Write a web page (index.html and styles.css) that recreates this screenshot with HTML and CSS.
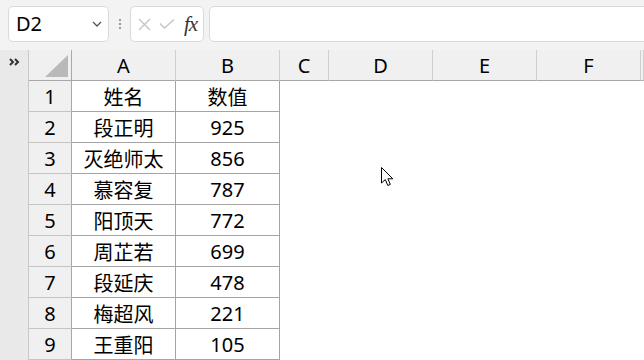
FILE: index.html
```html
<!DOCTYPE html>
<html lang="zh-CN">
<head>
    <meta charset="UTF-8">
    <title>Sheet</title>
    <link rel="stylesheet" href="styles.css">
</head>
<body>
    <div class="app">
        <div class="toolbar">
            <div class="namebox">
                <span class="ref">D2</span>
                <svg class="chev" width="10" height="6" viewBox="0 0 10 6"><path d="M1 1 L5 5 L9 1" fill="none" stroke="#555" stroke-width="1.3"/></svg>
            </div>
            <div class="grip"><i></i><i></i><i></i></div>
            <div class="fxbox">
                <svg width="13" height="13" viewBox="0 0 13 13"><path d="M1 1 L12 12 M12 1 L1 12" stroke="#c4c4c4" stroke-width="1.4"/></svg>
                <svg width="16" height="10" viewBox="0 0 16 10"><path d="M1 4.5 L5.5 9 L15 0.5" fill="none" stroke="#c4c4c4" stroke-width="1.4"/></svg>
                <span class="fx">fx</span>
            </div>
            <div class="formula"></div>
        </div>
        <div class="sheet">
            <div class="strip">
                <svg class="more" width="11" height="8" viewBox="0 0 11 8"><path d="M1 1 L4 4 L1 7 M6 1 L9 4 L6 7" fill="none" stroke="#333" stroke-width="2"/></svg>
            </div>
            <div class="grid">
                <div class="corner"><span class="tri"></span></div>
                <div class="ch">A</div>
                <div class="ch">B</div>
                <div class="ch">C</div>
                <div class="ch">D</div>
                <div class="ch">E</div>
                <div class="ch">F</div>
                <div class="ch"></div>

                <div class="rh">1</div><div class="td">姓名</div><div class="td">数值</div><div class="e"></div><div class="e"></div><div class="e"></div><div class="e"></div><div class="e"></div>
                <div class="rh">2</div><div class="td">段正明</div><div class="td">925</div><div class="e"></div><div class="e"></div><div class="e"></div><div class="e"></div><div class="e"></div>
                <div class="rh">3</div><div class="td">灭绝师太</div><div class="td">856</div><div class="e"></div><div class="e"></div><div class="e"></div><div class="e"></div><div class="e"></div>
                <div class="rh">4</div><div class="td">慕容复</div><div class="td">787</div><div class="e"></div><div class="e"></div><div class="e"></div><div class="e"></div><div class="e"></div>
                <div class="rh">5</div><div class="td">阳顶天</div><div class="td">772</div><div class="e"></div><div class="e"></div><div class="e"></div><div class="e"></div><div class="e"></div>
                <div class="rh">6</div><div class="td">周芷若</div><div class="td">699</div><div class="e"></div><div class="e"></div><div class="e"></div><div class="e"></div><div class="e"></div>
                <div class="rh">7</div><div class="td">段延庆</div><div class="td">478</div><div class="e"></div><div class="e"></div><div class="e"></div><div class="e"></div><div class="e"></div>
                <div class="rh">8</div><div class="td">梅超风</div><div class="td">221</div><div class="e"></div><div class="e"></div><div class="e"></div><div class="e"></div><div class="e"></div>
                <div class="rh">9</div><div class="td">王重阳</div><div class="td">105</div><div class="e"></div><div class="e"></div><div class="e"></div><div class="e"></div><div class="e"></div>
            </div>
        </div>
        <!-- mouse pointer over D5 -->
        <svg class="cursor" width="13" height="20" viewBox="0 0 13 20"><path d="M0.5 0.5 L0.5 16 L4.3 12.6 L6.8 18.5 L9.3 17.4 L6.9 11.8 L11.8 11.8 Z" fill="#fff" stroke="#000" stroke-width="1"/></svg>
    </div>
</body>
</html>
```

FILE: styles.css
```css
body {
    margin: 0;
    font-family: "Noto Sans", "Noto Sans CJK SC", sans-serif;
    color: #000;
    background: #fff;
}

.app {
    position: relative;
    width: 644px;
    height: 360px;
    overflow: hidden;
}

.toolbar {
    height: 50px;
    box-sizing: border-box;
    padding: 6px 0 8px 8px;
    background: #f3f3f3;
    display: flex;
    align-items: stretch;
}

.namebox {
    width: 101px;
    box-sizing: border-box;
    background: #fff;
    border: 1px solid #dadada;
    border-radius: 5px;
    display: flex;
    align-items: center;
    justify-content: space-between;
    padding: 0 6px 0 7px;
}

.ref {
    font-size: 20px;
    line-height: 1;
}

.grip {
    width: 21px;
    display: flex;
    flex-direction: column;
    align-items: center;
    justify-content: center;
    gap: 2px;
}

.grip i {
    width: 2px;
    height: 2px;
    background: #9a9a9a;
}

.fxbox {
    width: 74px;
    box-sizing: border-box;
    background: #fff;
    border: 1px solid #dadada;
    border-radius: 5px;
    display: flex;
    align-items: center;
    padding: 0 0 0 7px;
    gap: 8px;
}

.fx {
    font-family: "Liberation Serif", serif;
    font-style: italic;
    font-size: 21px;
    line-height: 1;
    color: #333;
    margin-left: 1px;
    letter-spacing: -1px;
}

.formula {
    flex: 1;
    margin-left: 5px;
    margin-right: -10px;
    background: #fff;
    border: 1px solid #dadada;
    border-radius: 5px;
}

.sheet {
    display: flex;
    height: 310px;
}

.strip {
    width: 29px;
    box-sizing: border-box;
    background: #e9e9e9;
    border-right: 1px solid #c9c9c9;
    padding: 8px 0 0 9px;
}

.more {
    display: block;
}

.grid {
    flex: 1;
    display: grid;
    grid-template-columns: 43px 104px 104px 49px 104px 104px 104px 1fr;
    grid-auto-rows: 31px;
}

.grid > div {
    box-sizing: border-box;
    display: flex;
    align-items: center;
    justify-content: center;
    font-size: 20px;
}

.corner {
    position: relative;
    background: #f0f0f0;
    border-right: 1px solid #a8a8a8;
    border-bottom: 1px solid #a8a8a8;
}

.tri {
    position: absolute;
    right: 3px;
    bottom: 3px;
    width: 0;
    height: 0;
    border-left: 23px solid transparent;
    border-bottom: 22px solid #b9b9b9;
}

.ch {
    background: #f0f0f0;
    border-right: 1px solid #cfcfcf;
    border-bottom: 1px solid #a8a8a8;
}

.rh {
    background: #f0f0f0;
    border-right: 1px solid #a8a8a8;
    border-bottom: 1px solid #c4c4c4;
}

.td {
    border-right: 1px solid #a4a4a4;
    border-bottom: 1px solid #a4a4a4;
}

.e {
    background: #fff;
}

.cursor {
    position: absolute;
    left: 381px;
    top: 167px;
}
```
